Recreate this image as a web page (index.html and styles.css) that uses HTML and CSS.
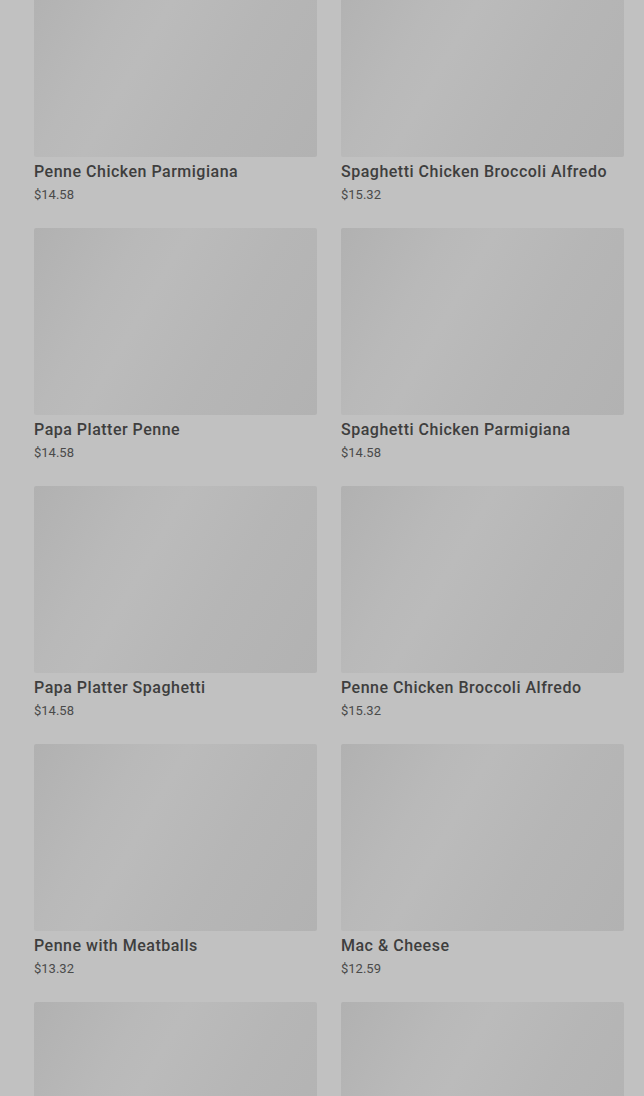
FILE: index.html
```html
<!DOCTYPE html>
<html lang="en">
<head>
  <meta charset="UTF-8" />
  <meta name="viewport" content="width=device-width, initial-scale=1" />
  <title>Menu</title>
  <link rel="stylesheet" href="styles.css">
</head>
<body>

  <div class="menu-grid">
    <div class="item">
      <div class="thumb"></div>
      <div class="name">Penne Chicken Parmigiana</div>
      <div class="price">$14.58</div>
    </div>
    <div class="item">
      <div class="thumb"></div>
      <div class="name">Spaghetti Chicken Broccoli Alfredo</div>
      <div class="price">$15.32</div>
    </div>
    <div class="item">
      <div class="thumb"></div>
      <div class="name">Papa Platter Penne</div>
      <div class="price">$14.58</div>
    </div>
    <div class="item">
      <div class="thumb"></div>
      <div class="name">Spaghetti Chicken Parmigiana</div>
      <div class="price">$14.58</div>
    </div>
    <div class="item">
      <div class="thumb"></div>
      <div class="name">Papa Platter Spaghetti</div>
      <div class="price">$14.58</div>
    </div>
    <div class="item">
      <div class="thumb"></div>
      <div class="name">Penne Chicken Broccoli Alfredo</div>
      <div class="price">$15.32</div>
    </div>
    <div class="item">
      <div class="thumb"></div>
      <div class="name">Penne with Meatballs</div>
      <div class="price">$13.32</div>
    </div>
    <div class="item">
      <div class="thumb"></div>
      <div class="name">Mac &amp; Cheese</div>
      <div class="price">$12.59</div>
    </div>
    <div class="item">
      <div class="thumb"></div>
      <div class="name">&nbsp;</div>
      <div class="price">&nbsp;</div>
    </div>
    <div class="item">
      <div class="thumb"></div>
      <div class="name">&nbsp;</div>
      <div class="price">&nbsp;</div>
    </div>
  </div>

</body>
</html>
```

FILE: styles.css
```css
html, body {
  height: 100%;
  overflow: hidden;
}
body {
  margin: 0;
  background: #c1c1c1;
  font-family: Roboto, "Liberation Sans", Arial, sans-serif;
}
.menu-grid {
  display: grid;
  grid-template-columns: 1fr 1fr;
  column-gap: 24px;
  row-gap: 24px;
  padding: 0 20px 0 34px;
  margin-top: -30px;
}
.thumb {
  height: 187px;
  border-radius: 2px;
  background: linear-gradient(120deg, #b1b1b1 0%, #b9b9b9 28%, #bbbbbb 40%, #b6b6b6 65%, #b2b2b2 100%);
}
.name {
  margin-top: 4px;
  font-size: 16px;
  line-height: 22px;
  font-weight: 500;
  letter-spacing: 0.5px;
  color: #3e3e3e;
  white-space: nowrap;
}
.price {
  font-size: 13px;
  line-height: 18px;
  color: #4a4a4a;
  margin-top: 3px;
}
```
